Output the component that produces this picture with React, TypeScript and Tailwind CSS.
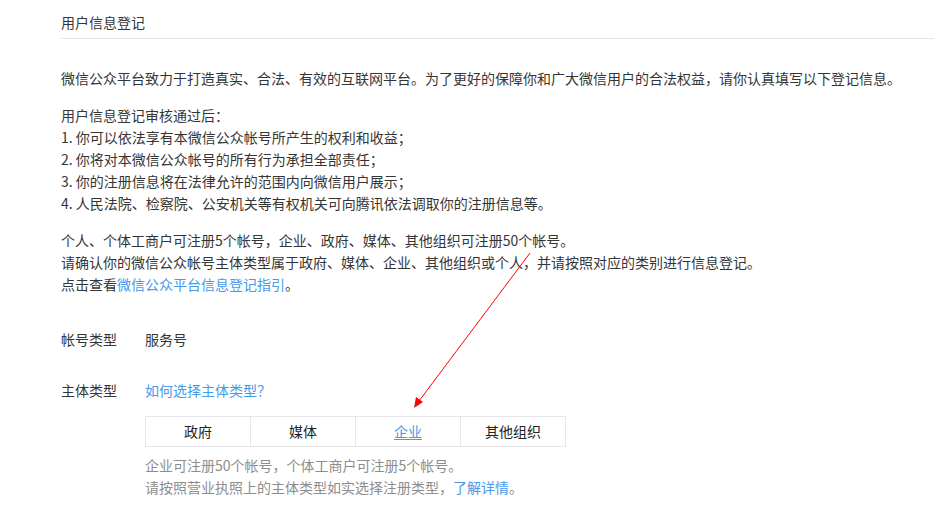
const font = { fontFamily: '"Noto Sans CJK SC", "Noto Sans", sans-serif' }

const tabs = ["政府", "媒体", "企业", "其他组织"]

export default function App() {
  return (
    <div className="relative w-[934px] h-[522px] bg-white text-[14px] text-[#353535] overflow-hidden" style={font}>
      <div className="pl-[61px]">
        <div className="pt-[10px] pb-[4px] leading-6 border-b border-[#e7e7eb]">用户信息登记</div>

        <p className="mt-[28px] leading-[22px]">
          微信公众平台致力于打造真实、合法、有效的互联网平台。为了更好的保障你和广大微信用户的合法权益，请你认真填写以下登记信息。
        </p>

        <div className="mt-[15px] leading-[22px]">
          <p>用户信息登记审核通过后：</p>
          <p>1. 你可以依法享有本微信公众帐号所产生的权利和收益；</p>
          <p>2. 你将对本微信公众帐号的所有行为承担全部责任；</p>
          <p>3. 你的注册信息将在法律允许的范围内向微信用户展示；</p>
          <p>4. 人民法院、检察院、公安机关等有权机关可向腾讯依法调取你的注册信息等。</p>
        </div>

        <div className="mt-[15px] leading-[22px]">
          <p>个人、个体工商户可注册5个帐号，企业、政府、媒体、其他组织可注册50个帐号。</p>
          <p>请确认你的微信公众帐号主体类型属于政府、媒体、企业、其他组织或个人，并请按照对应的类别进行信息登记。</p>
          <p>
            点击查看<a className="text-[#459ae9]">微信公众平台信息登记指引</a>。
          </p>
        </div>

        <div className="mt-[33px] flex leading-[22px]">
          <div className="w-[84px]">帐号类型</div>
          <div>服务号</div>
        </div>

        <div className="mt-[29px] flex leading-[22px]">
          <div className="w-[84px]">主体类型</div>
          <div>
            <a className="text-[#459ae9]">如何选择主体类型？</a>
            <div className="mt-[15px] flex w-[421px] border border-[#e7e7eb]">
              {tabs.map((t, i) => (
                <div
                  key={t}
                  className={
                    "flex-1 h-[29px] leading-[29px] text-center " +
                    (i > 0 ? "border-l border-[#e7e7eb] " : "") +
                    (i === 2 ? "text-[#459ae9] underline underline-offset-2" : "text-[#222]")
                  }
                >
                  {t}
                </div>
              ))}
            </div>
            <div className="mt-[7px] leading-[22px] text-[#8d8d8d]">
              <p>企业可注册50个帐号，个体工商户可注册5个帐号。</p>
              <p>
                请按照营业执照上的主体类型如实选择注册类型，<a className="text-[#459ae9]">了解详情</a>。
              </p>
            </div>
          </div>
        </div>
      </div>

      <svg className="absolute left-0 top-0 pointer-events-none" width="934" height="522">
        <line x1="530" y1="253" x2="419" y2="401" stroke="#ff0000" strokeWidth="1" />
        <polygon points="414,408 416,397 423,402" fill="#ff0000" />
      </svg>
    </div>
  )
}
